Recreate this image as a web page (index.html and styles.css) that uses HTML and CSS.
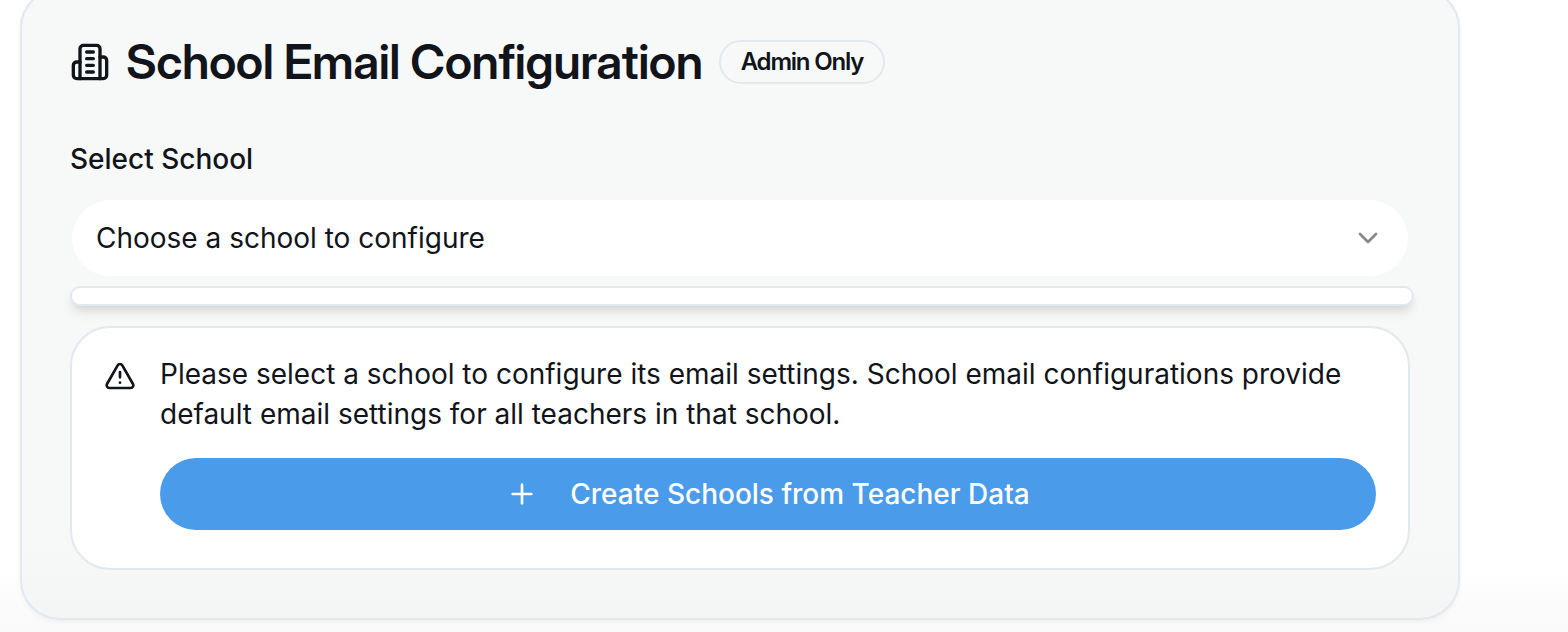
FILE: index.html
```html
<!DOCTYPE html>
<html lang="en">
<head>
<meta charset="utf-8">
<meta name="viewport" content="width=device-width, initial-scale=1">
<title>School Email Configuration</title>
<link rel="stylesheet" href="styles.css">
</head>
<body>
<main class="page">
  <section class="card">
    <header class="card-header">
      <svg class="icon icon-lg" viewBox="0 0 24 24" aria-hidden="true">
        <path d="M6 22V4a2 2 0 0 1 2-2h8a2 2 0 0 1 2 2v18Z"/>
        <path d="M6 12H4a2 2 0 0 0-2 2v6a2 2 0 0 0 2 2h2"/>
        <path d="M18 9h2a2 2 0 0 1 2 2v9a2 2 0 0 1-2 2h-2"/>
        <path d="M10 6h4M10 10h4M10 14h4M10 18h4"/>
      </svg>
      <h1 class="title">School Email Configuration</h1>
      <span class="badge">Admin Only</span>
    </header>

    <div class="field">
      <label class="label" for="school">Select School</label>
      <div class="select-wrap">
        <select class="select" id="school">
          <option>Choose a school to configure</option>
        </select>
        <svg class="icon icon-md chevron" viewBox="0 0 24 24" aria-hidden="true"><path d="m6 9 6 6 6-6"/></svg>
      </div>
      <div class="options"></div>
    </div>

    <div class="alert">
      <svg class="icon icon-md alert-icon" viewBox="0 0 24 24" aria-hidden="true">
        <path d="m21.73 18-8-14a2 2 0 0 0-3.48 0l-8 14A2 2 0 0 0 4 21h16a2 2 0 0 0 1.73-3"/>
        <path d="M12 9v4M12 17h.01"/>
      </svg>
      <div class="alert-body">
        <p class="alert-text">Please select a school to configure its email settings. School email configurations provide default email settings for all teachers in that school.</p>
        <button class="button" type="button">
          <svg class="icon icon-md" viewBox="0 0 24 24" aria-hidden="true"><path d="M5 12h14M12 5v14"/></svg>
          Create Schools from Teacher Data
        </button>
      </div>
    </div>
  </section>
</main>
</body>
</html>
```
FILE: styles.css
```css
* {
  box-sizing: border-box;
}

body {
  margin: 0;
  background: #fff;
  color: #11141a;
  font-family: Inter, "Liberation Sans", sans-serif;
  font-size: 28px;
  line-height: 40px;
}

.page {
  display: flow-root;
  padding: 0 108px 12px 20px;
  background: linear-gradient(to top, #f9f9f9, #fff 60px);
}

.card {
  margin-top: -12px;
  padding: 48px;
  border: 2px solid #e1e8ee;
  border-radius: 40px;
  background: linear-gradient(to top, #f4f6f5, #f7f9f8 80px);
  box-shadow: 0 2px 4px rgba(0, 0, 0, 0.05);
}

.card-header {
  display: flex;
  align-items: center;
  gap: 16px;
  margin-bottom: 53px;
}

.icon {
  flex: none;
  fill: none;
  stroke: currentColor;
  stroke-width: 2;
  stroke-linecap: round;
  stroke-linejoin: round;
}

.icon-lg {
  width: 40px;
  height: 40px;
}

.icon-md {
  width: 32px;
  height: 32px;
}

.title {
  margin: 0;
  font-family: "Inter Display", Inter, "Liberation Sans", sans-serif;
  font-size: 48px;
  font-weight: 600;
  line-height: 48px;
  letter-spacing: -0.01em;
}

.badge {
  padding: 4px 20px;
  border: 2px solid #e1e8ee;
  border-radius: 22px;
  font-size: 24px;
  font-weight: 600;
  line-height: 32px;
  letter-spacing: -0.05em;
}

.field {
  display: flex;
  flex-direction: column;
  margin-bottom: 20px;
}

.label {
  margin-bottom: 19px;
  font-weight: 500;
  line-height: 40px;
}

.select-wrap {
  display: grid;
  align-items: center;
}

.select,
.chevron {
  grid-area: 1 / 1;
}

.select {
  width: 100%;
  height: 80px;
  padding: 0 72px 0 24px;
  border: 2px solid transparent;
  border-radius: 40px;
  appearance: none;
  background: #fff padding-box;
  color: inherit;
  font: inherit;
}

.chevron {
  justify-self: end;
  margin-right: 26px;
  opacity: 0.5;
  pointer-events: none;
}

.options {
  height: 20px;
  margin: 8px -4px 0 0;
  border: 2px solid #e1e8ee;
  border-radius: 10px;
  background: #fff;
  box-shadow: 0 8px 12px -2px rgba(0, 0, 0, 0.1), 0 4px 8px -4px rgba(0, 0, 0, 0.1);
}

.alert {
  display: flex;
  gap: 24px;
  padding: 26px 32px 38px;
  border: 2px solid #e1e8ee;
  border-radius: 40px;
  background: #fff;
}

.alert-icon {
  margin-top: 6px;
}

.alert-body {
  flex: 1;
}

.alert-text {
  margin: 0 0 24px;
}

.button {
  display: flex;
  align-items: center;
  justify-content: center;
  gap: 32px;
  width: 100%;
  height: 72px;
  padding: 0 32px;
  border: 0;
  border-radius: 36px;
  background: #4a9bea;
  color: #fff;
  font: inherit;
  font-weight: 500;
}
```
